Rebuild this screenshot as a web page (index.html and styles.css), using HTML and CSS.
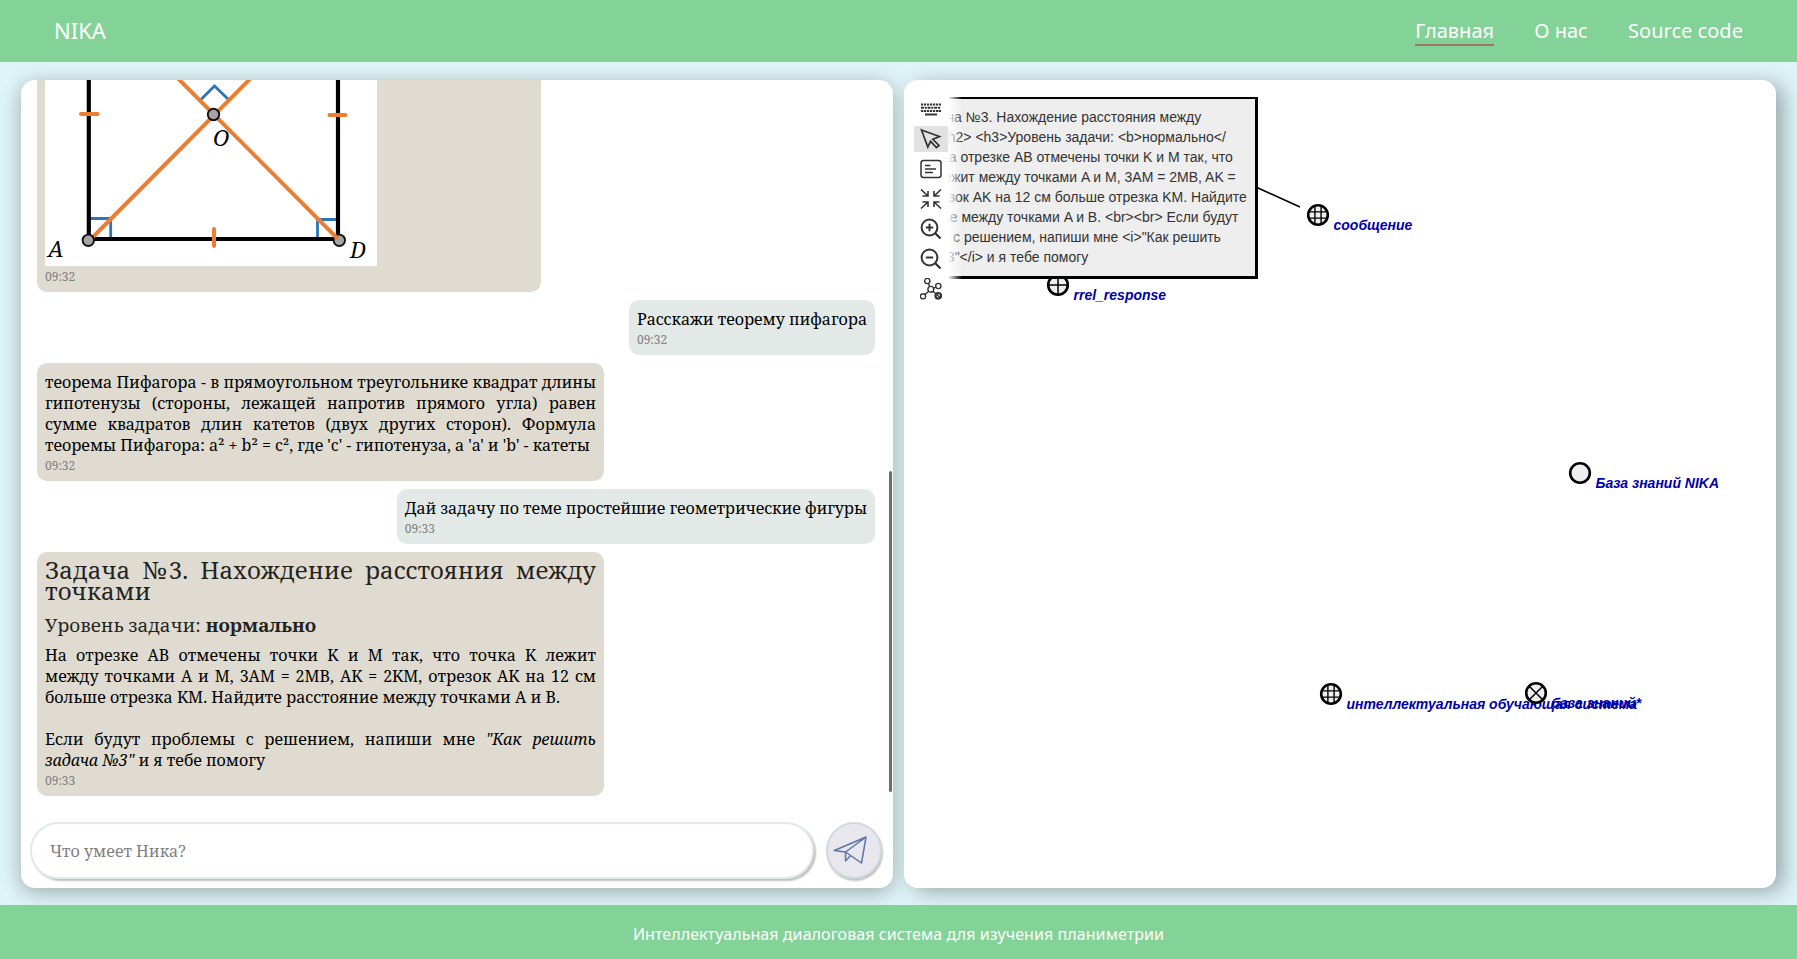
FILE: index.html
```html
<!DOCTYPE html>
<html lang="ru">
<head>
<meta charset="utf-8">
<title>NIKA</title>
<link rel="stylesheet" href="styles.css">
</head>
<body>
<header class="header">
  <a class="logo">NIKA</a>
  <nav class="nav">
    <a class="nav-link active">Главная</a>
    <a class="nav-link">О нас</a>
    <a class="nav-link">Source code</a>
  </nav>
</header>

<main class="main">
  <section class="panel chat">
    <div class="messages">
      <div class="msg bot msg-picture">
        <svg class="picture" width="332" height="186" viewBox="45 80 332 186">
          <rect x="45" y="80" width="332" height="186" fill="#fff"/>
          <g fill="none" stroke="#2e75b6" stroke-width="2.8">
            <path d="M90 218.5H110.7V238"/>
            <path d="M338 219.5H317.5V238"/>
            <path d="M201 99.5L214.5 86L228.5 99.5"/>
          </g>
          <path d="M88.8 78V239H338V78" fill="none" stroke="#000" stroke-width="4.2"/>
          <circle cx="339.3" cy="240.3" r="5.7" fill="#a5a5a5" stroke="#111" stroke-width="1.9"/>
          <g stroke="#ed7d31" stroke-width="4" stroke-linecap="round">
            <path d="M176.5 77L336.5 237.5M252 77L90 240"/>
            <path d="M81 114H97.5M329.5 115H345.5M214 229V246"/>
          </g>
          <g fill="#a5a5a5" stroke="#111" stroke-width="1.9">
            <circle cx="88.3" cy="240.3" r="5.7"/>
            <circle cx="213.5" cy="114.5" r="5.7"/>
          </g>
          <g class="vertex">
            <text x="48" y="257">A</text>
            <text x="213" y="146">O</text>
            <text x="350" y="257.5">D</text>
          </g>
        </svg>
        <time>09:32</time>
      </div>
      <div class="msg user"><p>Расскажи теорему пифагора</p><time>09:32</time></div>
      <div class="msg bot"><p>теорема Пифагора - в прямоугольном треугольнике квадрат длины гипотенузы (стороны, лежащей напротив прямого угла) равен сумме квадратов длин катетов (двух других сторон). Формула теоремы Пифагора: a² + b² = c², где 'c' - гипотенуза, а 'a' и 'b' - катеты</p><time>09:32</time></div>
      <div class="msg user"><p class="tight">Дай задачу по теме простейшие геометрические фигуры</p><time>09:33</time></div>
      <div class="msg bot task">
        <h2>Задача <span class="numero">№</span>3. Нахождение расстояния между точками</h2>
        <h3>Уровень задачи: <b>нормально</b></h3>
        <p>На отрезке AB отмечены точки K и M так, что точка K лежит <span class="keep">между точками</span> A и M, 3AM = 2MB, AK = 2KM, отрезок AK на 12 см больше отрезка KM. Найдите расстояние между точками A и B.<br><br>Если будут проблемы с решением, напиши мне <i>"Как решить задача №3"</i> и я тебе помогу</p>
        <time>09:33</time>
      </div>
      <span class="scrollbar"></span>
    </div>
    <form class="composer">
      <input class="field" type="text" placeholder="Что умеет Ника?">
      <button class="send" type="button" aria-label="Отправить">
        <svg width="34" height="30" viewBox="0 0 34 30" fill="none" stroke="#5d76a4" stroke-width="1.5" stroke-linejoin="round">
          <path d="M1.3 15.5L33 2L28.5 28L12.5 17ZM33 2L12.5 17V26L17.7 20.6"/>
        </svg>
      </button>
    </form>
  </section>

  <section class="panel graph">
    <svg class="scene" width="872" height="808" viewBox="904 80 872 808">
      <defs>
        <g id="node"><circle r="9.8" fill="#eee" stroke="#000" stroke-width="2.6"/></g>
        <g id="class-node"><use href="#node"/><path d="M-3.1 -9V9M3.1 -9V9M-9 -3.1H9M-9 3.1H9" stroke="#000" stroke-width="1.4"/></g>
      </defs>
      <path d="M1257 187.5L1300 207" stroke="#000" stroke-width="1.5"/>
      <g class="label">
        <use href="#node" x="1058" y="285"/>
        <path d="M1058 275V295M1048 285H1068" stroke="#000" stroke-width="1.5"/>
        <text x="1073.5" y="300">rrel_response</text>
        <use href="#class-node" x="1318" y="215"/>
        <text x="1333.5" y="230">сообщение</text>
        <use href="#node" x="1580" y="473"/>
        <text x="1595.5" y="488">База знаний NIKA</text>
        <use href="#class-node" x="1331" y="694"/>
        <text x="1346.5" y="709">интеллектуальная обучающая система</text>
        <use href="#node" x="1536" y="693"/>
        <path d="M1529 686L1543 700M1543 686L1529 700" stroke="#000" stroke-width="1.5"/>
        <text x="1551.5" y="708">база знаний*</text>
      </g>
    </svg>
    <div class="content-box">&lt;h2&gt;Задача №3. Нахождение расстояния между<br>точками&lt;/h2&gt; &lt;h3&gt;Уровень задачи: &lt;b&gt;нормально&lt;/<br>b&gt;&lt;/h3&gt; На отрезке AB отмечены точки K и M так, что<br>точка K лежит между точками A и M, 3AM = 2MB, AK =<br>2KM, отрезок AK на 12 см больше отрезка KM. Найдите<br>расстояние между точками A и B. &lt;br&gt;&lt;br&gt; Если будут<br>проблемы с решением, напиши мне &lt;i&gt;"Как решить<br>задача №3"&lt;/i&gt; и я тебе помогу</div>
    <div class="toolbar">
      <span class="tool"><svg viewBox="0 0 22 22"><path d="M1 6.5H21M4 13H18" stroke-width="2" stroke-dasharray="2.2 .8"/><path d="M1 9.8H21" stroke-width="2" stroke-dasharray="3 .8 2 .8"/><path d="M1 13H3.3M18.5 13H21" stroke-width="2"/><path d="M5 16.5H17" stroke-width="1.8"/></svg></span>
      <span class="tool selected"><svg viewBox="0 0 22 22"><path d="M1.5 2L19.5 8.5L12.8 11.3L19 17.5L16.5 19.5L10.5 13.3L7.8 19Z" stroke-width="1.7"/></svg></span>
      <span class="tool"><svg viewBox="0 0 22 22"><rect x="1" y="2.5" width="20" height="17" rx="2.5" stroke-width="1.5"/><path d="M5 7.5H10.5M5 11H16M5 14.5H13" stroke-width="1.4"/></svg></span>
      <span class="tool"><svg viewBox="0 0 22 22"><path d="M1 1.5L8 8M8 3V8H2.5M21 1.5L14 8M14 3V8H19.5M1 20.5L8 14M8 19V14H2.5M21 20.5L14 14M14 19V14H19.5" stroke-width="1.6"/></svg></span>
      <span class="tool"><svg viewBox="0 0 22 22"><circle cx="9.5" cy="9.5" r="7.9" stroke-width="2"/><path d="M15 15L20.5 20.5" stroke-width="2.3"/><path d="M5.8 9.5H13.2M9.5 5.8V13.2" stroke-width="2"/></svg></span>
      <span class="tool"><svg viewBox="0 0 22 22"><circle cx="9.5" cy="9.5" r="7.9" stroke-width="2"/><path d="M15 15L20.5 20.5" stroke-width="2.3"/><path d="M5.8 9.5H13.2" stroke-width="2"/></svg></span>
      <span class="tool"><svg viewBox="0 0 22 22"><g stroke-width="1.4"><circle cx="7.3" cy="3" r="2.6"/><circle cx="18.3" cy="8" r="2.6"/><circle cx="10.8" cy="11.3" r="2.9"/><circle cx="3" cy="18.3" r="2.6"/><path d="M8.3 5.5L9.7 8.5M13.5 10.3L15.8 9M8.8 13.3L5 16.5M13 13.2L15.5 15.5"/></g><circle cx="18.3" cy="17.8" r="2.8" stroke-width="2.2"/><path d="M16.5 16.2L19.8 19.3" stroke-width="1.5"/></svg></span>
    </div>
  </section>
</main>

<footer class="footer">Интеллектуальная диалоговая система для изучения планиметрии</footer>
</body>
</html>
```
FILE: styles.css
```css
* { box-sizing: border-box; }

body {
  margin: 0;
  height: 959px;
  display: flex;
  flex-direction: column;
  overflow: hidden;
  background: #dff4f8;
  font-family: "Noto Sans", sans-serif;
}

.header {
  height: 62px;
  flex: none;
  display: flex;
  align-items: center;
  justify-content: space-between;
  padding: 0 54px;
  background: #83d297;
  color: #fff;
  position: relative;
}

.logo { font-size: 22px; padding-bottom: 2px; }

.nav { display: flex; gap: 40px; font-size: 20px; letter-spacing: .03px; }

.nav-link { line-height: 27px; border-bottom: 2px solid transparent; }
.nav-link.active { border-color: #a1746a; }

.main {
  flex: 1;
  min-height: 0;
  display: flex;
  gap: 11px;
  padding: 18px 21px 17px;
}

.panel {
  flex: 1;
  min-width: 0;
  background: #fff;
  border-radius: 14px;
  position: relative;
}

.chat {
  display: flex;
  flex-direction: column;
  box-shadow: 0 4px 20px rgba(0, 0, 0, .3);
}

.graph {
  overflow: hidden;
  box-shadow: 8px 4px 20px rgba(0, 0, 0, .3);
}

.messages {
  height: 716px;
  flex: none;
  display: flex;
  flex-direction: column;
  align-items: flex-start;
  justify-content: flex-end;
  gap: 8px;
  padding: 0 18px 0 16px;
  overflow: hidden;
  border-radius: 14px 14px 0 0;
  position: relative;
  font: 16px/21px "Noto Serif", "Liberation Serif", serif;
}

.msg {
  flex: none;
  max-width: 567px;
  padding: 9px 8px 7px;
  border-radius: 10px;
  color: #000;
  text-align: justify;
}

.bot { background: #dfdbd0; }
.user { background: #e2e9e7; align-self: flex-end; }

.msg-picture {
  width: 504px;
  padding-top: 0;
  border-radius: 0 0 10px 10px;
}

.msg p { margin: 0; letter-spacing: -.025px; }
.msg .tight { letter-spacing: -.05px; }
.task p { letter-spacing: .02px; }

.msg h2 {
  margin: -2px 0 14px;
  font-size: 24px;
  font-weight: 400;
  line-height: 21px;
  color: rgba(0, 0, 0, .85);
}

.msg h3 {
  margin: 0 0 9px;
  font-size: 18.9px;
  font-weight: 400;
  line-height: 21px;
  color: rgba(0, 0, 0, .85);
}

.numero { letter-spacing: -4px; }
.keep { white-space: nowrap; }

.msg time {
  display: block;
  margin-top: 1px;
  font-size: 12px;
  line-height: 17px;
  color: #808080;
}

.picture { display: block; margin-bottom: 2px; }
.vertex { font: italic 22px "Noto Serif", "Liberation Serif", serif; }

.scrollbar {
  position: absolute;
  right: 1px;
  top: 391px;
  width: 3px;
  height: 321px;
  border-radius: 2px;
  background: #6e6e6e;
}

.composer { display: flex; gap: 12px; padding: 26px 11px 0 9px; }

.field {
  flex: 1;
  height: 57px;
  padding: 0 18px;
  border: 2px solid #e0eaeb;
  border-radius: 29px;
  box-shadow: 2px 2px 2px rgba(0, 0, 0, .25);
  font: 16px "Noto Serif", "Liberation Serif", serif;
  background: #fff;
  outline: none;
}

.field::placeholder { color: #808080; opacity: 1; }

.send {
  width: 56px;
  height: 57px;
  padding: 11px 0 0 5px;
  display: flex;
  align-items: flex-start;
  justify-content: flex-start;
  border: 2px solid #cfdadd;
  border-radius: 50%;
  background: #e8e7ed;
  box-shadow: 1px 2px 2px rgba(0, 0, 0, .25);
}

.send svg { flex: none; }

.scene { display: block; }
.label { font: italic bold 14px "Liberation Sans", Arial, sans-serif; fill: #0000a8; }

.content-box {
  position: absolute;
  left: -40px;
  top: 17px;
  width: 394px;
  height: 182px;
  padding: 8px 0 0 16px;
  border: 3px solid #000;
  border-top-width: 2px;
  background: #eee;
  font: 14px/20px "Liberation Sans", Arial, sans-serif;
  color: #333;
  white-space: nowrap;
}

.toolbar {
  position: absolute;
  left: 0;
  top: 0;
  width: 58px;
  height: 225px;
  padding: 16px 0 0 10px;
  display: flex;
  flex-direction: column;
  gap: 4px;
  background: linear-gradient(90deg, #fff 44px, rgba(255, 255, 255, 0) 58px);
}

.tool {
  width: 34px;
  height: 26px;
  display: flex;
  align-items: center;
  justify-content: center;
}

.tool.selected { background: #e2e2e2; }
.tool svg { width: 22px; height: 22px; fill: none; stroke: #333; }

.footer {
  height: 54px;
  flex: none;
  padding-top: 4px;
  display: flex;
  align-items: center;
  justify-content: center;
  background: #83d297;
  color: #fff;
  font-size: 16px;
  letter-spacing: .075px;
  position: relative;
}
```
